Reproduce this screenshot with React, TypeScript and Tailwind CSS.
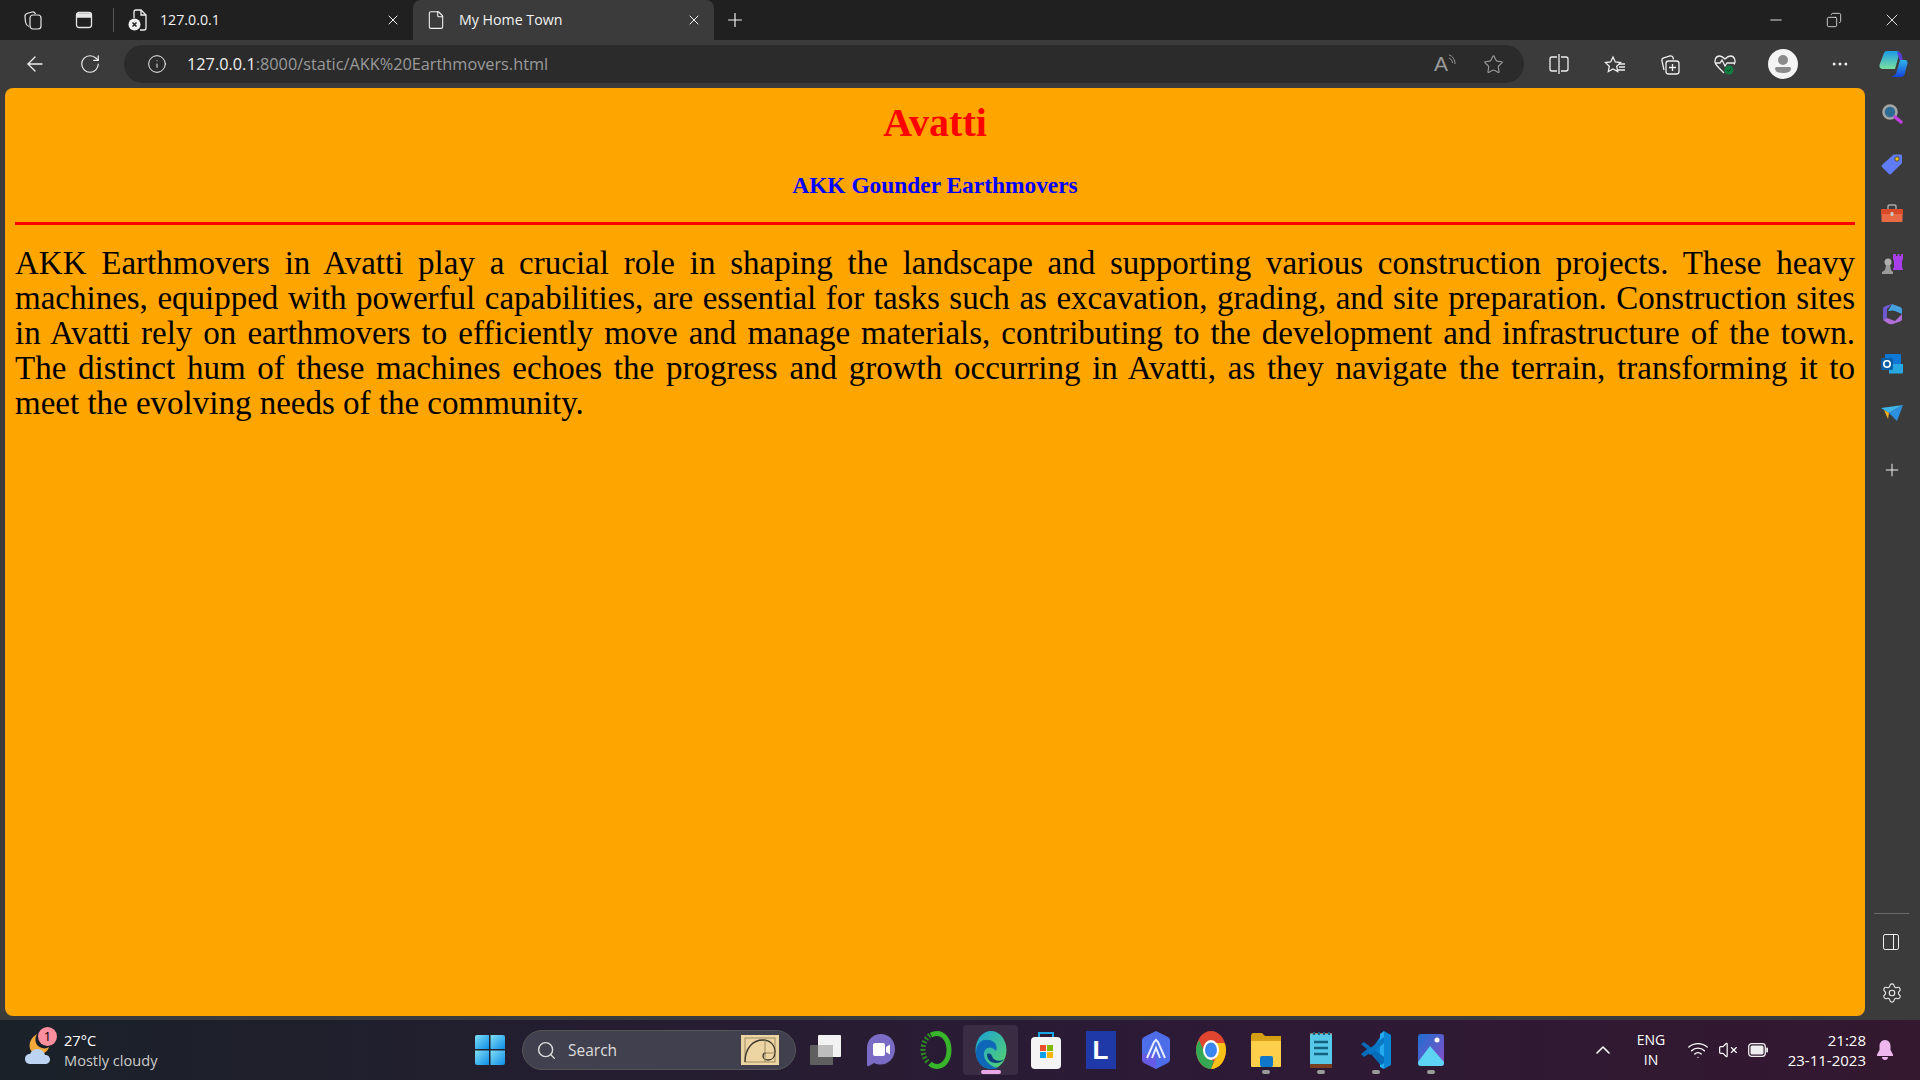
import {
  ArrowLeft,
  ChevronUp,
  Copy,
  Ellipsis,
  File,
  Info,
  Minus,
  PanelRight,
  Plus,
  RotateCw,
  Search,
  Settings,
  Star,
  VolumeX,
  Wifi,
  X,
} from "lucide-react";

const UI_FONT = "font-['Open_Sans','Noto_Sans',sans-serif]";

const LINES = [
  "AKK Earthmovers in Avatti play a crucial role in shaping the landscape and supporting various construction projects. These heavy",
  "machines, equipped with powerful capabilities, are essential for tasks such as excavation, grading, and site preparation. Construction sites",
  "in Avatti rely on earthmovers to efficiently move and manage materials, contributing to the development and infrastructure of the town.",
  "The distinct hum of these machines echoes the progress and growth occurring in Avatti, as they navigate the terrain, transforming it to",
];

function Workspaces() {
  return (
    <svg width="20" height="20" viewBox="0 0 20 20" fill="none" stroke="#e6e6e6" strokeWidth="1.2">
      <rect x="7" y="5" width="11" height="14" rx="3" />
      <path d="M6 16.5c-1.5-.5-3-2-3.400-4L2 7c-.3-2 .8-3 2-3.500L9 2c1.500-.4 3 .3 3.500 2" />
    </svg>
  );
}

function VerticalTabs() {
  return (
    <svg width="18" height="18" viewBox="0 0 18 18" fill="none" stroke="#e6e6e6" strokeWidth="1.3">
      <rect x="1.500" y="1.500" width="15" height="15" rx="2.500" />
      <path d="M2 3h14v3H2z" fill="#e6e6e6" />
    </svg>
  );
}

function BrokenFile() {
  return (
    <svg width="20" height="22" viewBox="0 0 20 22" fill="none">
      <path d="M6 9V3a2 2 0 0 1 2-2h5l5 5v13a2 2 0 0 1-2 2h-4" stroke="#eee" strokeWidth="1.300" />
      <path d="M13 1v5h5" stroke="#eee" strokeWidth="1.300" />
      <circle cx="6.500" cy="15.500" r="6" fill="#f2f2f2" />
      <path d="M4.500 13.500l4 4M8.500 13.500l-4 4" stroke="#202020" strokeWidth="1.500" />
    </svg>
  );
}

function ReadAloudWaves() {
  return (
    <svg width="9" height="12" viewBox="0 0 9 12" fill="none" stroke="#9a9a9a" strokeWidth="1">
      <path d="M1 1c4 1 6 5 6 9M1 4c2 .7 3.500 3 3.500 5" />
    </svg>
  );
}

function SplitScreen() {
  return (
    <svg width="20" height="22" viewBox="0 0 20 22" fill="none" stroke="#eee" strokeWidth="1.300">
      <path d="M8 4H3a2 2 0 0 0-2 2v10a2 2 0 0 0 2 2h5M12 4h5a2 2 0 0 1 2 2v10a2 2 0 0 1-2 2h-5M10 1v20" />
    </svg>
  );
}

function Favorites() {
  return (
    <svg width="22" height="22" viewBox="0 0 22 22" fill="none" stroke="#eee" strokeWidth="1.300">
      <path d="M9 2l2.300 5 5.200.6-3.800 3.600 1 5.300L9 14l-4.700 2.500 1-5.300L1.500 7.600 6.700 7z" transform="translate(0 2)" />
      <path d="M15 11h6M15 14h6M13 17h8" />
    </svg>
  );
}

function Collections() {
  return (
    <svg width="22" height="24" viewBox="0 0 22 24" fill="none" stroke="#eee" strokeWidth="1.300">
      <path d="M5 18l-2-9c-.4-1.500.4-2.800 1.800-3.200L11 4c1.400-.3 2.800.4 3.200 2l.3 1.500" />
      <rect x="7" y="9" width="13" height="13" rx="2.500" />
      <path d="M13.500 12v7M10 15.500h7" />
    </svg>
  );
}

function Health() {
  return (
    <svg width="24" height="24" viewBox="0 0 24 24" fill="none">
      <path
        d="M6 16L3 12.500C.5 9 2.500 4 6.500 4c2.500 0 4 1.500 5.500 3 1.500-1.500 3-3 5.500-3 4 0 6 5 3.500 8.500M2 11h5l2-3 3 6 2-3h8M6 16l5 5"
        stroke="#eee"
        strokeWidth="1.300"
      />
      <circle cx="16" cy="18" r="4.500" fill="#107c41" />
      <path d="M14 18l1.500 1.500 2.500-2.500" stroke="#0b3d20" strokeWidth="1" />
    </svg>
  );
}

function Profile() {
  return (
    <svg width="30" height="30" viewBox="0 0 30 30">
      <circle cx="15" cy="15" r="15" fill="#f4f4f4" />
      <circle cx="15" cy="11" r="5" fill="#8a8a8a" />
      <path d="M7 19.500c0-1 1-1.500 2-1.500h12c1 0 2 .5 2 1.500 0 3-3 4.500-8 4.500s-8-1.500-8-4.500z" fill="#8a8a8a" />
    </svg>
  );
}

function Copilot() {
  return (
    <svg width="30" height="30" viewBox="0 0 30 30">
      <defs>
        <linearGradient id="copa" x1="0" y1="0" x2="0" y2="1">
          <stop offset="0" stopColor="#1c9be6" />
          <stop offset="1" stopColor="#7be0a0" />
        </linearGradient>
        <linearGradient id="copb" x1="0" y1="0" x2="0" y2="1">
          <stop offset="0" stopColor="#2fb4f0" />
          <stop offset="1" stopColor="#1443d8" />
        </linearGradient>
      </defs>
      <path d="M9 2h10c1.500 0 2 1 2.500 2L17 20H5c-2.500 0-4-1.500-3.500-4L6 4c.5-1.300 1.500-2 3-2z" fill="url(#copa)" />
      <path d="M13 28H23c2 0 3-1 3.500-2.500l3-11c.3-1.800-.7-3.500-2.500-3.500H22l-4 14-2.500 2z" fill="url(#copb)" />
      <path d="M21 3c1.500.5 2.500 2 3 4l1 4h-3.500L19 3z" fill="#5a3fd6" />
    </svg>
  );
}

function MagnifierApp() {
  return (
    <svg width="22" height="22" viewBox="0 0 22 22" fill="none">
      <circle cx="9" cy="9" r="6.500" fill="#2d6a94" stroke="#a5a5a5" strokeWidth="2.500" />
      <path d="M14 14l6 5" stroke="#c23fe0" strokeWidth="3.500" strokeLinecap="round" />
    </svg>
  );
}

function TagApp() {
  return (
    <svg width="22" height="22" viewBox="0 0 22 22">
      <path d="M1 12L12 2c.5-.4 1-.5 1.500-.5H20c.5 0 1 .5 1 1v7c0 .5-.2 1-.5 1.300L10 21c-.5.500-1.500.5-2 0l-7-7c-.5-.5-.5-1.500 0-2z" fill="#5f7cf5" />
      <circle cx="16" cy="6" r="2.200" fill="#f0c020" stroke="#33302a" strokeWidth=".8" />
    </svg>
  );
}

function ToolsApp() {
  return (
    <svg width="24" height="20" viewBox="0 0 24 20">
      <path d="M8 5V2.500C8 1.500 8.500 1 9.500 1h5c1 0 1.500.5 1.500 1.500V5" fill="none" stroke="#aaa" strokeWidth="1.500" />
      <rect x="1" y="5" width="22" height="6" rx="1" fill="#d84a2a" />
      <rect x="1.500" y="10" width="21" height="8" rx="1" fill="#e86a45" />
      <rect x="10.500" y="8" width="3" height="4" rx="1" fill="#c8c8c8" />
    </svg>
  );
}

function ChessApp() {
  return (
    <svg width="24" height="24" viewBox="0 0 24 24">
      <circle cx="8" cy="10" r="3.500" fill="#aeaeae" />
      <path d="M6 13h4l1 5 2 2v2H2v-2l3-2z" fill="#9a9a9a" />
      <path d="M14 2h2v2h1.500V2h2v2H21V2h2v5l-1 2v6l1 2v1H13v-1l1-2V9l-1-2V2z" fill="#a83ee8" />
    </svg>
  );
}

function M365App() {
  return (
    <svg width="22" height="22" viewBox="0 0 22 22">
      <path d="M11 1l8 3c1.500.5 2 1.500 2 3v4l-7-3H7z" fill="#45a2de" />
      <path d="M2 6c0-1.500 1-2.500 2.500-3L11 1 6 6v9l-4 2z" fill="#6d5ad0" />
      <path d="M6 15l8 3 7-7v5c0 1-.5 2-2 2.500L12 21c-2 .5-3.500 0-5-.5l-5-3.500z" fill="#b06ed8" />
      <circle cx="11" cy="11" r="3.500" fill="#3b3b3b" />
    </svg>
  );
}

function OutlookApp() {
  return (
    <svg width="22" height="22" viewBox="0 0 22 22">
      <rect x="4" y="1" width="16" height="10" rx="1" fill="#0f78d4" />
      <path d="M10 11h12v8c0 1-.5 1.500-1.500 1.500H8V14z" fill="#27a8e0" />
      <rect x="0" y="5" width="12" height="12" rx="1.500" fill="#0a5ea8" />
      <circle cx="6" cy="11" r="3.200" fill="none" stroke="#fff" strokeWidth="1.600" />
    </svg>
  );
}

function SendApp() {
  return (
    <svg width="24" height="20" viewBox="0 0 24 20">
      <path d="M1 4L23 1 9 9z" fill="#3fb4e8" />
      <path d="M9 9L23 1 17 17z" fill="#2c8fe0" />
      <path d="M4 6l5 3-1 6z" fill="#f2b01e" />
    </svg>
  );
}

function Weather() {
  return (
    <svg width="36" height="36" viewBox="0 0 36 36">
      <path d="M15 2c-3 5-2 12 5 14 4 1 5 0 7-1-2 6-8 9-14 7C6 19 5 8 15 2z" fill="#f3a83a" />
      <path d="M9 32c-4 0-6-2-6-5s2-5 5-5c1-3 4-5 7-5 4 0 7 2 8 6 3 0 5 2 5 4.500S26 32 23 32z" fill="#bcd4f2" />
    </svg>
  );
}

function WindowsLogo() {
  return (
    <svg width="30" height="30" viewBox="0 0 30 30">
      <defs>
        <linearGradient id="win" x1="0" y1="0" x2="1" y2="1">
          <stop offset="0" stopColor="#7fe0f5" />
          <stop offset="1" stopColor="#0f8ce8" />
        </linearGradient>
      </defs>
      <path d="M2 0h12v14H0V2a2 2 0 0 1 2-2z" fill="url(#win)" />
      <path d="M15.500 0H28a2 2 0 0 1 2 2v12H15.500z" fill="url(#win)" />
      <path d="M0 15.500h14V30H2a2 2 0 0 1-2-2z" fill="url(#win)" />
      <path d="M15.500 15.500H30V28a2 2 0 0 1-2 2H15.500z" fill="url(#win)" />
    </svg>
  );
}

function GoldenRatio() {
  return (
    <svg width="38" height="30" viewBox="0 0 38 30" fill="none">
      <rect width="38" height="30" fill="#ecd5a2" />
      <rect x="4" y="3" width="30" height="24" stroke="#9c8b63" strokeWidth="1" />
      <path d="M4 27C4 13 12 5 22 5c7 0 12 5 12 12 0 5-3 8-7 8-3 0-5-2-5-4s1-3 3-3" stroke="#3a362c" strokeWidth="1.300" />
      <path d="M24 5v22M24 18h10" stroke="#9c8b63" strokeWidth="1" />
    </svg>
  );
}

function TaskView() {
  return (
    <svg width="32" height="30" viewBox="0 0 32 30">
      <rect x="0" y="10" width="23" height="20" rx="1" fill="#5f5f5f" />
      <rect x="8" y="0" width="23" height="22" rx="1" fill="#f2f2f2" />
      <rect x="8" y="10" width="15" height="12" fill="#bdbdbd" />
    </svg>
  );
}

function ChatApp() {
  return (
    <svg width="30" height="34" viewBox="0 0 30 34">
      <path d="M15 1C7 1 1 7 1 15v17c0 1 1 1.500 2 1l5-3c2 1 4 1.500 7 1.500 8 0 14-7 14-15.500S23 1 15 1z" fill="#7a6cc4" />
      <rect x="7" y="10" width="12" height="13" rx="2" fill="#fff" />
      <path d="M20 14l4-2.500v10L20 19z" fill="#fff" />
    </svg>
  );
}

function RingApp() {
  return (
    <svg width="32" height="38" viewBox="0 0 32 38" fill="none">
      <path d="M11 4c2-1 4-1.500 6-1.500 7 0 12 7 12 16.500s-5 16.500-12 16.500c-3 0-5-1-7-3" stroke="#38b52a" strokeWidth="5" />
      <path d="M10 4C5 8 3 13 3 19c0 5 2 10 6 13" stroke="#2c8a22" strokeWidth="5" strokeDasharray="2 2" />
    </svg>
  );
}

function EdgeApp() {
  return (
    <svg width="32" height="38" viewBox="0 0 32 38">
      <defs>
        <linearGradient id="edgea" x1="0" y1="0" x2="1" y2="1">
          <stop offset="0" stopColor="#1aa0d8" />
          <stop offset="1" stopColor="#58d56a" />
        </linearGradient>
      </defs>
      <ellipse cx="16" cy="19" rx="15.500" ry="19" fill="url(#edgea)" />
      <path d="M1 20C2 10 9 8 14 9c6 1 9 6 7 11-3-4-8-5-11-1-3 5 0 13 9 17 2 1 4 1 6 0-3 2-6 2-9 2C7 38 0 30 1 20z" fill="#0f67b8" />
      <path d="M12 23c0 5 3 9 9 9 3 0 6-1 8-4-3 3-11 2-12-3-1-2-2-3-5-2z" fill="#0c3f80" />
    </svg>
  );
}

function StoreApp() {
  return (
    <svg width="30" height="38" viewBox="0 0 30 38" fill="none">
      <path d="M8 7V2h14v5" stroke="#19a6e8" strokeWidth="2" />
      <rect y="6" width="30" height="32" rx="4" fill="#f4f4f4" />
      <rect x="9" y="14" width="6" height="6" fill="#ea4e2a" />
      <rect x="16" y="14" width="6" height="6" fill="#7fb900" />
      <rect x="9" y="21" width="6" height="6" fill="#0ea0e8" />
      <rect x="16" y="21" width="6" height="6" fill="#f7b500" />
    </svg>
  );
}

function ArcApp() {
  return (
    <svg width="28" height="38" viewBox="0 0 28 38" fill="none">
      <path d="M14 0l12 6c1 1 2 2 2 3v20c0 1-1 2-2 3l-12 6-12-6c-1-1-2-2-2-3V9c0-1 1-2 2-3z" fill="#4d6ee8" />
      <path d="M14 23v15l-12-6c-1-1-2-2-2-3v-6z" fill="#7a4fe0" opacity=".6" />
      <path d="M5 27L12 11l2-2 2 2 7 16M10 27l4-10 4 10" stroke="#e8ecff" strokeWidth="2" />
    </svg>
  );
}

function ChromeApp() {
  return (
    <svg width="30" height="38" viewBox="0 0 30 38">
      <ellipse cx="15" cy="19" rx="15" ry="19" fill="#e0452f" />
      <path d="M15 38c8 0 15-8 15-19 0-3-.5-5-1.500-7H15l5 14z" fill="#f6c016" />
      <path d="M15 38C7 38 0 29 0 19c0-5 2-8 3-10l8 18 7 3z" fill="#35a853" />
      <ellipse cx="15" cy="19" rx="8" ry="10" fill="#fff" />
      <ellipse cx="15" cy="19" rx="6" ry="7.500" fill="#3a85f0" />
    </svg>
  );
}

function FilesApp() {
  return (
    <svg width="30" height="34" viewBox="0 0 30 34">
      <path d="M0 3c0-1.500 1-3 2-3h9l3 3h16v8H0z" fill="#d49f12" />
      <rect y="6" width="30" height="28" rx="1" fill="#fdcf4a" />
      <rect y="6" width="30" height="2" fill="#d8a21a" />
      <rect x="9" y="23" width="13" height="11" rx="2" fill="#0f78c8" />
    </svg>
  );
}

function NotepadApp() {
  return (
    <svg width="22" height="36" viewBox="0 0 22 36">
      <rect y="1" width="22" height="35" rx="1" fill="#7a3e20" />
      <rect y="1" width="22" height="31" fill="#f4f4f4" opacity=".3" />
      <rect y="2" width="22" height="30" rx="1" fill="#58c8e8" />
      <path d="M4 0v3M9 0v3M14 0v3M19 0v3" stroke="#1c5f80" strokeWidth="2" />
      <path d="M4 10h14M4 16h14M4 22h14" stroke="#13627f" strokeWidth="2.500" />
    </svg>
  );
}

function VsCodeApp() {
  return (
    <svg width="30" height="38" viewBox="0 0 30 38">
      <path d="M23 0l7 4v30l-7 4-14-17z" fill="#0c84d4" />
      <path d="M23 0v38l-4-2V3z" fill="#25a9ef" />
      <path d="M0 13l3-2 20 15v6l-3 2L9 22l-6 4-3-3 6-5z" fill="#066bb8" />
      <path d="M23 6v6L9 24l-3-4z" fill="#0a76c6" />
    </svg>
  );
}

function PhotosApp() {
  return (
    <svg width="26" height="32" viewBox="0 0 26 32">
      <defs>
        <linearGradient id="pho" x1="0" y1="0" x2="1" y2="1">
          <stop offset="0" stopColor="#1f6fd0" />
          <stop offset="1" stopColor="#8a4ec8" />
        </linearGradient>
      </defs>
      <rect width="26" height="32" rx="3" fill="url(#pho)" />
      <circle cx="19" cy="6" r="2.500" fill="#fff" />
      <path d="M0 28l12-16 14 16v1a3 3 0 0 1-3 3H3a3 3 0 0 1-3-3z" fill="#5ed4f5" />
    </svg>
  );
}

function LApp() {
  return (
    <div className="flex h-[38px] w-[30px] items-center justify-center bg-[#1f3aa8] font-['Liberation_Sans',sans-serif] text-[26px] font-bold text-white">
      L
    </div>
  );
}

function Battery() {
  return (
    <svg width="20" height="14" viewBox="0 0 20 14" fill="none">
      <rect x=".7" y=".7" width="16.600" height="12.600" rx="3" stroke="#eee" strokeWidth="1.300" />
      <rect x="2.500" y="2.500" width="13" height="9" rx="1.500" fill="#eee" />
      <rect x="18.200" y="4.500" width="1.800" height="5" rx=".8" fill="#eee" />
    </svg>
  );
}

function Bell() {
  return (
    <svg width="18" height="20" viewBox="0 0 18 20" fill="#eeb8ee">
      <path d="M9 0c3.500 0 5.500 3 5.500 6v4L17 14.500c.3 1-.2 1.500-1 1.500H2c-.8 0-1.300-.5-1-1.500L3.500 10V6C3.500 3 5.500 0 9 0z" />
      <path d="M6 17h6c0 2-1.500 3-3 3s-3-1-3-3z" />
    </svg>
  );
}

const SIDE_ICONS = [MagnifierApp, TagApp, ToolsApp, ChessApp, M365App, OutlookApp, SendApp];

const TASK_ICONS = [
  { key: "task", Icon: TaskView },
  { key: "chat", Icon: ChatApp },
  { key: "ring", Icon: RingApp },
  { key: "edge", Icon: EdgeApp, active: true },
  { key: "store", Icon: StoreApp },
  { key: "l", Icon: LApp },
  { key: "arc", Icon: ArcApp },
  { key: "chrome", Icon: ChromeApp },
  { key: "files", Icon: FilesApp, open: true },
  { key: "notes", Icon: NotepadApp, open: true },
  { key: "code", Icon: VsCodeApp, open: true },
  { key: "photos", Icon: PhotosApp, open: true },
];

export default function App() {
  return (
    <div className={`flex h-screen w-screen flex-col overflow-hidden bg-[#3b3b3b] ${UI_FONT}`}>
      {/* tab strip */}
      <div className="flex h-10 shrink-0 items-center bg-[#202020] text-[#f2f2f2]">
        <div className="flex w-[47px] justify-end pr-1">
          <Workspaces />
        </div>
        <div className="ml-[28px] flex w-[18px] justify-center">
          <VerticalTabs />
        </div>
        <div className="ml-[20px] h-6 w-px bg-[#555]" />
        <div className="flex h-full w-[299px] items-center pl-[14px] pr-[12px] text-[14.200px]">
          <BrokenFile />
          <span className="ml-[12px] flex-1">127.0.0.1</span>
          <X size={16} strokeWidth={1.5} />
        </div>
        <div className="flex h-full w-[301px] items-center rounded-t-lg bg-[#3b3b3b] pl-[13px] pr-[12px] text-[14.200px]">
          <File size={20} strokeWidth={1.3} />
          <span className="ml-[13px] flex-1">My Home Town</span>
          <X size={16} strokeWidth={1.5} />
        </div>
        <Plus className="ml-[10px]" size={22} strokeWidth={1.3} />
        <div className="ml-auto flex items-center">
          <Minus size={18} strokeWidth={1.2} />
          <Copy className="ml-[41px] scale-x-[-1]" size={16} strokeWidth={1.2} />
          <X className="ml-[40px] mr-[18px]" size={20} strokeWidth={1.1} />
        </div>
      </div>

      {/* toolbar */}
      <div className="flex h-12 shrink-0 items-center text-[#eee]">
        <ArrowLeft className="ml-[23px]" size={24} strokeWidth={1.3} />
        <RotateCw className="ml-[32px]" size={22} strokeWidth={1.3} />
        <div className="ml-[23px] flex h-[38px] w-[1400px] items-center rounded-full bg-[#2b2b2b] pl-[23px] pr-[20px]">
          <Info size={20} strokeWidth={1.2} />
          <span className="ml-[20px] text-[16.300px]">
            127.0.0.1<span className="text-[#9a9a9a]">:8000/static/AKK%20Earthmovers.html</span>
          </span>
          <span className="ml-auto font-['Liberation_Sans',sans-serif] text-[21px] font-light text-[#9a9a9a]">A</span>
          <div className="mb-[8px]">
            <ReadAloudWaves />
          </div>
          <Star className="ml-[26px] text-[#9a9a9a]" size={21} strokeWidth={1.3} />
        </div>
        <div className="ml-[25px] flex w-[20px] justify-center">
          <SplitScreen />
        </div>
        <div className="ml-[35px]">
          <Favorites />
        </div>
        <div className="ml-[33px]">
          <Collections />
        </div>
        <div className="ml-[32px]">
          <Health />
        </div>
        <div className="ml-[31px]">
          <Profile />
        </div>
        <Ellipsis className="ml-[32px]" size={20} strokeWidth={1.6} />
        <div className="ml-[28px]">
          <Copilot />
        </div>
      </div>

      {/* page and edge sidebar */}
      <div className="flex min-h-0 flex-1">
        <main className="ml-[5px] w-[1860px] rounded-lg bg-[#ffa500] px-[10px] font-['Liberation_Serif',serif] text-black">
          <h1 className="mt-[12px] text-center text-[40px] font-bold leading-[46px] text-[#ff0000]">Avatti</h1>
          <h2 className="mt-[25px] text-center text-[23.400px] font-bold leading-[28px] text-[#0000ff]">
            AKK Gounder Earthmovers
          </h2>
          <hr className="mt-[23px] h-[3px] border-0 bg-[#ff0000]" />
          <div className="mt-[21px] text-[33px] leading-[35px]">
            {LINES.map((line) => (
              <p key={line} className="text-justify [text-align-last:justify]">
                {line}
              </p>
            ))}
            <p>meet the evolving needs of the community.</p>
          </div>
        </main>
        <aside className="flex flex-1 flex-col items-center pr-[2px] text-[#eee]">
          <div className="mt-[1px] flex flex-col items-center">
            {SIDE_ICONS.map((Icon, i) => (
              <div key={i} className="flex h-[50px] w-full items-center justify-center">
                <Icon />
              </div>
            ))}
            <Plus className="mt-[21px]" size={20} strokeWidth={1.2} />
          </div>
          <div className="mt-auto h-px w-[35px] bg-[#6a6a6a]" />
          <PanelRight className="mt-[18px] -ml-px" size={20} strokeWidth={1.2} />
          <Settings className="mb-[12px] mt-[30px]" size={22} strokeWidth={1.2} />
        </aside>
      </div>
      <div className="h-1 shrink-0" />

      {/* taskbar */}
      <footer className="flex h-[60px] shrink-0 items-center bg-gradient-to-r from-[#1a2129] via-[#2c1a36] via-60% to-[#33182f] text-white">
        <div className="relative ml-[22px] w-[38px]">
          <Weather />
          <span className="absolute left-[16px] top-[-5px] flex h-[19px] w-[19px] items-center justify-center rounded-full bg-[#ff8f9f] text-[13px] text-black">
            1
          </span>
        </div>
        <div className="ml-[4px] w-[411px] text-[14.600px] leading-[20px]">
          <div>27°C</div>
          <div className="text-[#ccc]">Mostly cloudy</div>
        </div>
        <WindowsLogo />
        <div className="ml-[17px] flex h-10 w-[274px] items-center rounded-full border border-[#555] bg-[#41404e] pl-[13px] pr-[16px] text-[#ddd]">
          <Search size={21} strokeWidth={1.6} />
          <span className="ml-[11px] flex-1 pt-[2px] text-[15.500px]">Search</span>
          <GoldenRatio />
        </div>
        <div className="ml-[2px] flex">
          {TASK_ICONS.map(({ key, Icon, active, open }) => (
            <div
              key={key}
              className={`relative flex h-[50px] w-[55px] items-center justify-center rounded ${active ? "bg-[#ffffff14]" : ""}`}
            >
              <Icon />
              {active && <span className="absolute bottom-[1px] h-[4px] w-[20px] rounded-full bg-[#e8a8e8]" />}
              {open && <span className="absolute bottom-[1px] h-[4px] w-[8px] rounded-full bg-[#9a9a9a]" />}
            </div>
          ))}
        </div>
        <ChevronUp className="ml-[133px]" size={24} strokeWidth={1.6} />
        <div className="ml-[20px] w-[32px] text-center text-[14px] leading-[20px]">
          <div>ENG</div>
          <div>IN</div>
        </div>
        <Wifi className="ml-[20px]" size={22} strokeWidth={1.5} />
        <VolumeX className="ml-[9px]" size={20} strokeWidth={1.4} />
        <div className="ml-[10px]">
          <Battery />
        </div>
        <div className="ml-auto text-right text-[15px] leading-[20px]">
          <div>21:28</div>
          <div>23-11-2023</div>
        </div>
        <div className="ml-[10px] mr-[26px]">
          <Bell />
        </div>
      </footer>
    </div>
  );
}
